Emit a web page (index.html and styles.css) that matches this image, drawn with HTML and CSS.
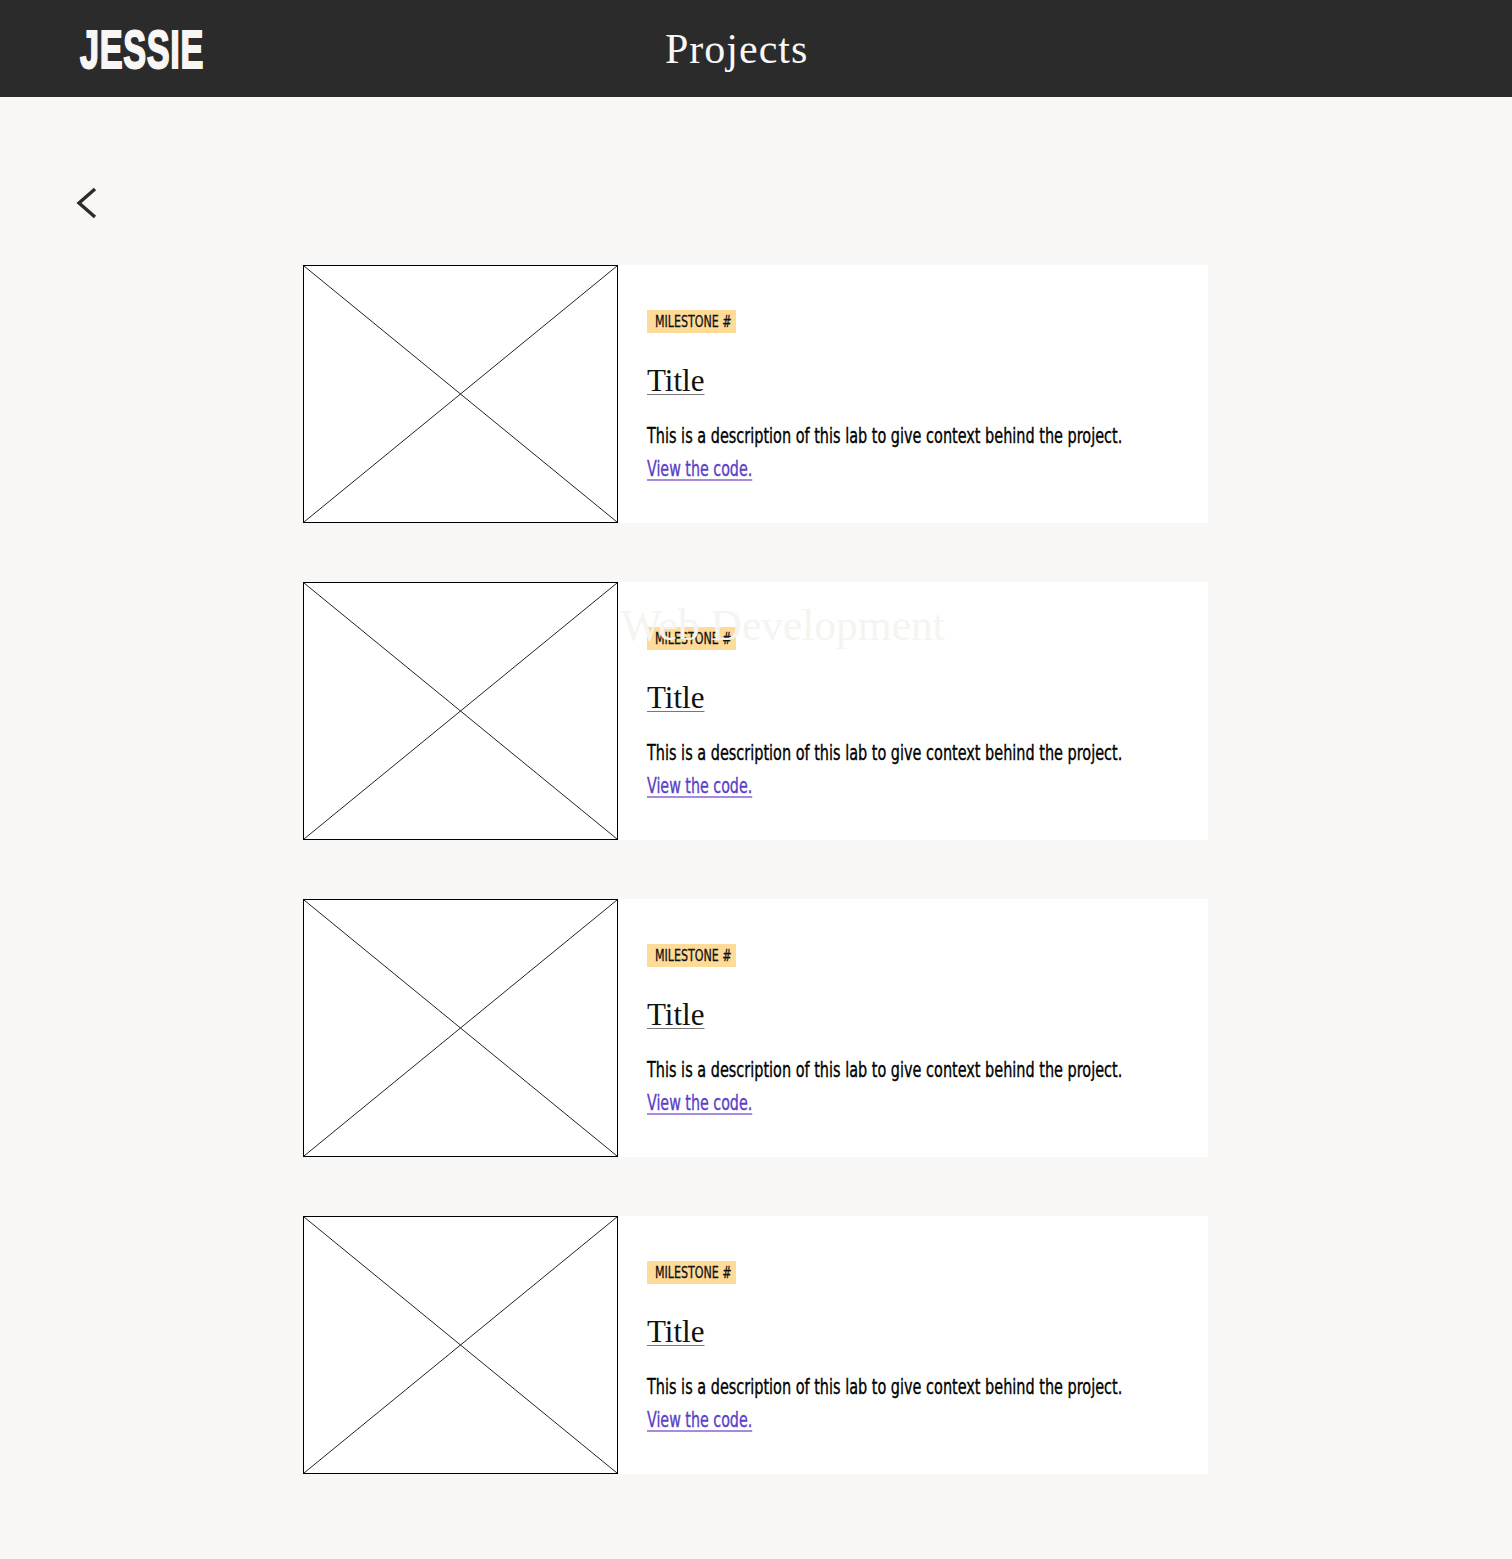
FILE: index.html
```html
<!DOCTYPE html>
<html lang="en">
<head>
<meta charset="utf-8">
<title>Projects</title>
<link rel="stylesheet" href="styles.css">
</head>
<body>
<header class="topbar">
  <div class="logo"><span class="logo-text">JESSIE</span></div>
  <h1 class="page-title">Projects</h1>
</header>
<main class="content">
  <a class="back" href="#" aria-label="Back">
    <svg width="26" height="36" viewBox="0 0 26 36"><path d="M21 4 L5 18 L21 32" fill="none" stroke="#2b2b2b" stroke-width="3.4" stroke-linecap="butt" stroke-linejoin="miter"/></svg>
  </a>
  <div class="ghost">Web Development</div>
  <section class="list">
    <article class="card">
      <div class="thumb"><svg class="x" viewBox="0 0 100 100" preserveAspectRatio="none"><line x1="0" y1="0" x2="100" y2="100"/><line x1="100" y1="0" x2="0" y2="100"/></svg></div>
      <div class="body">
        <span class="badge"><span class="cond">MILESTONE #</span></span>
        <h2 class="title"><a href="#">Title</a></h2>
        <p class="desc"><span class="cond">This is a description of this lab to give context behind the project.</span></p>
        <a class="link" href="#"><span class="cond">View the code.</span></a>
      </div>
    </article>
    <article class="card">
      <div class="thumb"><svg class="x" viewBox="0 0 100 100" preserveAspectRatio="none"><line x1="0" y1="0" x2="100" y2="100"/><line x1="100" y1="0" x2="0" y2="100"/></svg></div>
      <div class="body">
        <span class="badge"><span class="cond">MILESTONE #</span></span>
        <h2 class="title"><a href="#">Title</a></h2>
        <p class="desc"><span class="cond">This is a description of this lab to give context behind the project.</span></p>
        <a class="link" href="#"><span class="cond">View the code.</span></a>
      </div>
    </article>
    <article class="card">
      <div class="thumb"><svg class="x" viewBox="0 0 100 100" preserveAspectRatio="none"><line x1="0" y1="0" x2="100" y2="100"/><line x1="100" y1="0" x2="0" y2="100"/></svg></div>
      <div class="body">
        <span class="badge"><span class="cond">MILESTONE #</span></span>
        <h2 class="title"><a href="#">Title</a></h2>
        <p class="desc"><span class="cond">This is a description of this lab to give context behind the project.</span></p>
        <a class="link" href="#"><span class="cond">View the code.</span></a>
      </div>
    </article>
    <article class="card">
      <div class="thumb"><svg class="x" viewBox="0 0 100 100" preserveAspectRatio="none"><line x1="0" y1="0" x2="100" y2="100"/><line x1="100" y1="0" x2="0" y2="100"/></svg></div>
      <div class="body">
        <span class="badge"><span class="cond">MILESTONE #</span></span>
        <h2 class="title"><a href="#">Title</a></h2>
        <p class="desc"><span class="cond">This is a description of this lab to give context behind the project.</span></p>
        <a class="link" href="#"><span class="cond">View the code.</span></a>
      </div>
    </article>
  </section>
</main>
</body>
</html>
```
FILE: styles.css
```css
* { box-sizing: border-box; }
html, body { margin: 0; padding: 0; }
body {
  background: #f8f7f5;
  color: #000;
  font-family: "Liberation Sans Narrow", "DejaVu Sans Condensed", "Liberation Sans", sans-serif;
}
.topbar {
  height: 97px;
  background: #2b2b2b;
  display: flex;
  align-items: center;
  padding-left: 80px;
}
.logo {
  width: 585px;
  height: 97px;
  display: flex;
  align-items: center;
}
.logo-text {
  display: inline-block;
  font-family: "Liberation Sans", "DejaVu Sans", sans-serif;
  font-weight: 700;
  font-size: 54px;
  line-height: 1;
  color: #f8f7f5;
  transform: scaleX(0.635);
  transform-origin: left center;
  margin-top: 1px;
  -webkit-text-stroke: 2px #f8f7f5;
  letter-spacing: 1px;
}
.page-title {
  margin: 0;
  font-family: "Liberation Serif", "DejaVu Serif", serif;
  font-weight: 400;
  font-size: 42px;
  letter-spacing: 1px;
  color: #f8f7f5;
  line-height: 1;
}
.content {
  position: relative;
  padding: 88px 0 86px;
}
.back {
  display: block;
  margin-left: 74px;
  width: 26px;
  height: 36px;
}
.back svg { display: block; }
.ghost {
  position: absolute;
  left: 621px;
  top: 503px;
  font-family: "Liberation Serif", "DejaVu Serif", serif;
  font-size: 43.5px;
  color: #f6f4f0;
  z-index: 2;
  pointer-events: none;
  white-space: nowrap;
}
.list {
  width: 905px;
  margin: 44px auto 0 303px;
  display: flex;
  flex-direction: column;
  gap: 59px;
}
.card {
  display: flex;
  height: 258px;
  background: #fff;
}
.thumb {
  width: 315px;
  height: 258px;
  border: 1px solid #000;
  background: #fff;
  flex: none;
}
.x {
  display: block;
  width: 100%;
  height: 100%;
}
.x line {
  stroke: #222;
  stroke-width: 1;
  vector-effect: non-scaling-stroke;
}
.body {
  padding: 45px 0 0 29px;
  display: flex;
  flex-direction: column;
  align-items: flex-start;
}
.cond {
  display: inline-block;
  transform-origin: left center;
  white-space: nowrap;
}
.badge {
  display: inline-block;
  background: #ffdb99;
  height: 23px;
  padding: 0 6px 0 8px;
  font-size: 16px;
  line-height: 23px;
  color: #111;
  width: 89px;
  overflow: hidden;
}
.badge .cond { transform: scaleX(0.77); -webkit-text-stroke: 0.3px #111; }
.title {
  margin: 30px 0 0;
  font-family: "Liberation Serif", "DejaVu Serif", serif;
  font-weight: 400;
  font-size: 31px;
  line-height: 36px;
}
.title a {
  color: #111;
  text-decoration: underline;
  text-decoration-thickness: 1px;
  text-underline-offset: 3px;
  text-decoration-color: #777;
}
.desc {
  margin: 22px 0 0;
  font-size: 21px;
  line-height: 30px;
  color: #000;
}
.desc .cond { transform: scaleX(0.765); -webkit-text-stroke: 0.35px #000; }
.link {
  font-size: 21px;
  line-height: 30px;
  color: #5b3ec8;
  text-decoration: none;
  margin-top: 3px;
  width: 106px;
}
.link .cond {
  transform: scaleX(0.755);
  -webkit-text-stroke: 0.35px #5b3ec8;
  text-decoration: underline;
  text-decoration-color: #a48be0;
  text-decoration-thickness: 2px;
  text-underline-offset: 3px;
}
```
